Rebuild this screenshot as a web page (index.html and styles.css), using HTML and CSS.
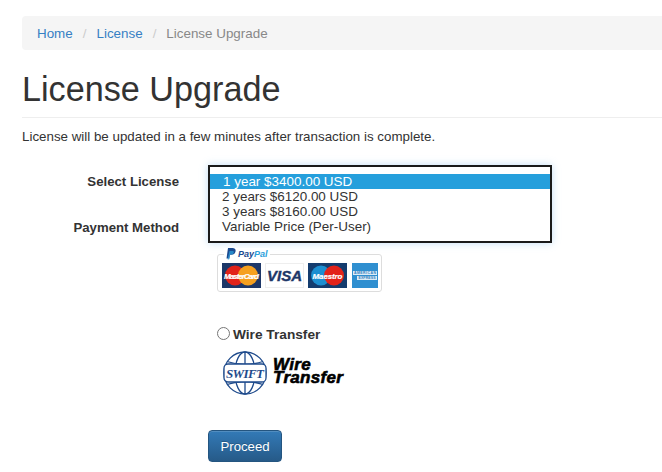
FILE: index.html
```html
<!DOCTYPE html>
<html lang="en">
<head>
<meta charset="utf-8">
<title>License Upgrade</title>
<link rel="stylesheet" href="styles.css">
</head>
<body>
<main class="page">
  <nav class="breadcrumb">
    <a href="#">Home</a><span class="sep">/</span>
    <a href="#">License</a><span class="sep">/</span>
    <span class="current">License Upgrade</span>
  </nav>
  <h1 class="title">License Upgrade</h1>
  <p class="intro">License will be updated in a few minutes after transaction is complete.</p>
  <form class="form">
    <div class="labels">
      <div class="label">Select License</div>
      <div class="label">Payment Method</div>
    </div>
    <div class="controls">
      <div class="listbox" role="listbox">
        <div class="option selected">1 year $3400.00 USD</div>
        <div class="option">2 years $6120.00 USD</div>
        <div class="option">3 years $8160.00 USD</div>
        <div class="option">Variable Price (Per-User)</div>
      </div>
      <div class="paypal">
        <div class="pp-legend">
          <svg class="pp-mark" width="10" height="12" viewBox="0 0 10 12"><path d="M2 0h4.500c2.500 0 3.500 1.500 3 3.500-.5 2.300-2 3.300-4 3.300H4L3.300 10.500H.5z" fill="#1b4a90"/><path d="M3.500 3h3c1 0 1.500.5 1.300 1.500C7.500 6 6.500 6.500 5 6.500H4L3.200 11.500H1.600z" fill="#2c9fdb" opacity=".75"/></svg>
          <span class="pp-word">Pay<span class="pp-pal">Pal</span></span>
        </div>
        <div class="cards">
          <svg class="card" width="39" height="25" viewBox="0 0 39 25"><rect width="39" height="25" fill="#1d3768"/><circle cx="13" cy="12.500" r="10" fill="#e2231a"/><circle cx="26" cy="12.500" r="10" fill="#f5a01f"/><text x="19.500" y="15.500" class="card-text" textLength="35">MasterCard</text></svg>
          <svg class="card card-visa" width="39" height="25" viewBox="0 0 39 25"><rect x=".5" y=".5" width="38" height="24" fill="#fff" stroke="#eee"/><text x="19.500" y="17.500" class="visa-text">VISA</text></svg>
          <svg class="card" width="39" height="25" viewBox="0 0 39 25"><rect width="39" height="25" fill="#143c6e"/><circle cx="13" cy="12.500" r="10" fill="#1c8fd1"/><circle cx="26" cy="12.500" r="10" fill="#e2231a"/><text x="19.500" y="15.500" class="card-text" textLength="30">Maestro</text></svg>
          <svg class="card card-amex" width="26" height="25" viewBox="0 0 26 25"><rect width="26" height="25" fill="#2f8fd0"/><rect x="1" y="8" width="24" height="4" fill="#dcecf6"/><rect x="5" y="13" width="20" height="4" fill="#dcecf6"/><text x="13" y="11.300" class="amex-text" textLength="22">AMERICAN</text><text x="15" y="16.300" class="amex-text" textLength="17">EXPRESS</text></svg>
        </div>
      </div>
      <label class="wire">
        <input class="radio" type="radio" name="method">
        <span>Wire Transfer</span>
      </label>
      <div class="swift">
        <svg width="44" height="44" viewBox="0 0 44 44">
          <g class="globe">
            <circle cx="22" cy="22" r="21"/>
            <ellipse cx="22" cy="22" rx="10" ry="21"/>
            <path d="M22 1v42M4 10.500q18 6 36 0M4 33.500q18-6 36 0"/>
          </g>
          <rect x="1" y="13" width="42" height="18" rx="4" class="band"/>
          <text x="22" y="27" class="swift-text" textLength="38">SWIFT</text>
        </svg>
        <div class="swift-word">Wire<br>Transfer</div>
      </div>
      <button class="proceed" type="button">Proceed</button>
    </div>
  </form>
</main>
</body>
</html>
```
FILE: styles.css
```css
* { box-sizing: border-box; }
html, body { margin: 0; padding: 0; overflow: hidden; }
body {
  font-family: "Liberation Sans", Arial, sans-serif;
  font-size: 13.350px;
  line-height: 20px;
  color: #333;
  background: #fff;
}
.page { padding: 16px 0 0 22px; }
.breadcrumb {
  display: flex;
  height: 34px;
  align-items: center;
  padding: 1px 15px 0;
  background: #f5f5f5;
  border-radius: 4px 0 0 4px;
  font-size: 13.400px;
}
.breadcrumb a { color: #3580c4; text-decoration: none; }
.sep { color: #ccc; padding: 0 10px; }
.current { color: #888; }
.title {
  margin: 20px 0 0;
  padding-bottom: 8px;
  border-bottom: 1px solid #eee;
  font-size: 34.200px;
  font-weight: 400;
  line-height: 39px;
}
.intro { margin: 9px 0 0; }
.form { display: flex; margin-top: 18px; }
.labels { width: 157px; text-align: right; font-weight: 700; font-size: 13.200px; }
.label { height: 46px; padding-top: 7px; }
.controls { margin-left: 29px; flex: none; width: 344px; }
.listbox {
  height: 78px;
  padding: 7px 0;
  border: 2px solid #1a1a1a;
  background: #fff;
  box-shadow: 0 0 8px rgba(102, 175, 233, .4);
  font-size: 13.450px;
  line-height: 15px;
  color: #333;
}
.option { height: 15px; padding-left: 12px; white-space: nowrap; }
.selected { background: #259fdc; color: #fff; padding-left: 13px; }
.paypal {
  position: relative;
  width: 165px;
  height: 38px;
  margin: 11px 0 0 9px;
  border: 1px solid #ddd;
  border-radius: 3px;
}
.pp-legend {
  position: absolute;
  top: -7px;
  left: 6px;
  display: flex;
  align-items: center;
  gap: 2px;
  padding: 0 2px;
  background: #fff;
}
.pp-word {
  font-size: 9px;
  line-height: 12px;
  font-weight: 700;
  font-style: italic;
  color: #1b4a90;
}
.pp-pal { color: #2c9fdb; }
.cards { display: flex; gap: 4px; padding: 8px 0 0 4px; }
.card { display: block; flex: none; }
.card-amex { margin-left: 1px; }
.card-text {
  font: italic 700 8px "Liberation Sans", sans-serif;
  fill: #fff;
  stroke: #fff;
  stroke-width: .2;
  text-anchor: middle;
}
.visa-text {
  font: italic 700 15px "Liberation Sans", sans-serif;
  fill: #1d3768;
  stroke: #1d3768;
  stroke-width: .4;
  text-anchor: middle;
}
.amex-text {
  font: 700 3.500px "Liberation Sans", sans-serif;
  fill: #2f7fc0;
  text-anchor: middle;
}
.wire {
  display: flex;
  align-items: center;
  margin: 32px 0 0 9px;
  padding-top: 1px;
  height: 20px;
  font-size: 13.700px;
  font-weight: 700;
}
.radio { width: 13px; height: 13px; margin: 0 3px 2px 0; }
.swift { display: flex; align-items: center; margin: 7px 0 0 15px; gap: 6px; }
.swift svg { display: block; flex: none; }
.globe { fill: none; stroke: #1f4b8c; stroke-width: 1.300; }
.band { fill: #fff; stroke: #1f4b8c; stroke-width: 1.300; }
.swift-text {
  font: italic 700 13px "Liberation Serif", serif;
  fill: #1f4b8c;
  text-anchor: middle;
}
.swift-word {
  font-size: 17px;
  line-height: 13px;
  margin-bottom: 4px;
  font-weight: 700;
  font-style: italic;
  color: #000;
  -webkit-text-stroke: .6px #000;
  letter-spacing: .3px;
}
.proceed {
  display: block;
  width: 74px;
  height: 32px;
  margin-top: 35px;
  padding: 0;
  border: 1px solid #245580;
  border-radius: 4px;
  background: linear-gradient(#337ab7, #265a88);
  color: #fff;
  font: 13.200px "Liberation Sans", sans-serif;
  text-shadow: 0 -1px 0 rgba(0, 0, 0, .2);
  box-shadow: inset 0 1px 0 rgba(255, 255, 255, .15);
}
```
